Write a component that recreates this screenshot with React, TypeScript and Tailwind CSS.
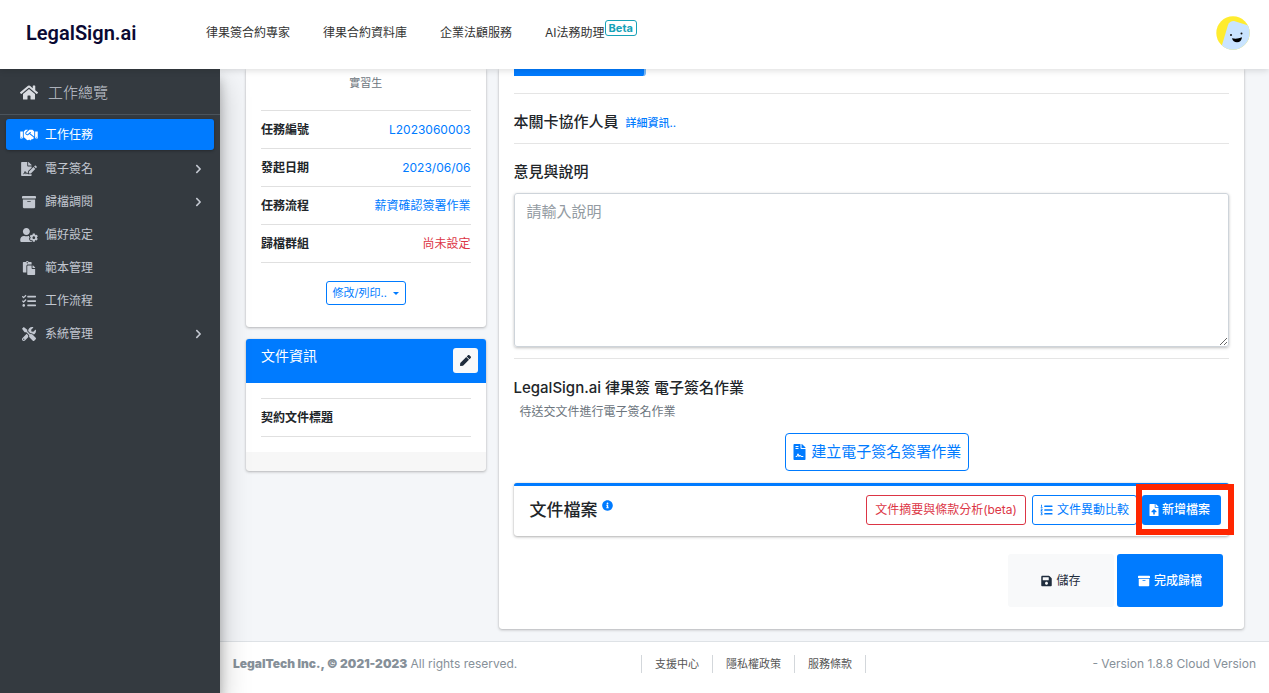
import type { ReactNode } from "react";
import type { IconType } from "react-icons";
import {
  FaArchive,
  FaChevronRight,
  FaFileContract,
  FaFileSignature,
  FaFileUpload,
  FaHandshake,
  FaHome,
  FaInfoCircle,
  FaListOl,
  FaPaste,
  FaPen,
  FaSave,
  FaTasks,
  FaTools,
  FaUserCog,
} from "react-icons/fa";

type MenuItem = { label: string; icon: IconType; active?: boolean; nested?: boolean };

const menu: MenuItem[] = [
  { label: "工作任務", icon: FaHandshake, active: true },
  { label: "電子簽名", icon: FaFileSignature, nested: true },
  { label: "歸檔調閱", icon: FaArchive, nested: true },
  { label: "偏好設定", icon: FaUserCog },
  { label: "範本管理", icon: FaPaste },
  { label: "工作流程", icon: FaTasks },
  { label: "系統管理", icon: FaTools, nested: true },
];

const taskRows = [
  { label: "任務編號", value: "L2023060003", tone: "text-[#007bff]" },
  { label: "發起日期", value: "2023/06/06", tone: "text-[#007bff]" },
  { label: "任務流程", value: "薪資確認簽署作業", tone: "text-[#007bff]" },
  { label: "歸檔群組", value: "尚未設定", tone: "text-[#dc3545]" },
];

function Avatar() {
  return (
    <svg viewBox="0 0 34 34" className="h-[34px] w-[34px]" role="img" aria-label="使用者">
      <defs>
        <clipPath id="avatar-clip">
          <circle cx="17" cy="17" r="16.7" />
        </clipPath>
      </defs>
      <g clipPath="url(#avatar-clip)">
        <rect width="34" height="34" fill="#ffec2e" />
        <path d="M6 29 L12 9 Q13.500 5 18 5 L34 10 V34 H6 Z" fill="#c9e4ff" />
        <circle cx="15" cy="19" r="1" fill="#111" />
        <circle cx="25.500" cy="17.500" r="1" fill="#111" />
        <path d="M16 22.300 Q21 23.500 26 21.300 Q25.500 26.300 21 26.300 Q17 26.300 16 22.300 Z" fill="#000" />
      </g>
    </svg>
  );
}

function Header() {
  return (
    <header className="relative z-20 flex h-[69px] shrink-0 items-center bg-white pr-[19px] pb-1 pl-[26px] shadow-[0_2px_6px_rgba(0,0,0,0.12)]">
      <a href="#" className="w-[180px] font-['Roboto'] text-[20px] leading-6 font-semibold text-[#0b0933]">
        LegalSign.ai
      </a>
      <nav className="flex items-center gap-[33px] text-[#333]">
        <a href="#">律果簽合約專家</a>
        <a href="#">律果合約資料庫</a>
        <a href="#">企業法顧服務</a>
        <a href="#" className="flex items-start">
          AI法務助理
          <span className="-mt-1 rounded-[3px] border border-[#17a2b8] px-[3px] text-[11px] leading-[14px] font-bold text-[#17a2b8]">
            Beta
          </span>
        </a>
      </nav>
      <button type="button" aria-label="帳號" className="ml-auto">
        <Avatar />
      </button>
    </header>
  );
}

function Sidebar() {
  return (
    <aside className="relative z-10 w-[220px] shrink-0 bg-[#343a40] text-[#c2c7d0] shadow-[0_14px_28px_rgba(0,0,0,0.25),0_10px_10px_rgba(0,0,0,0.22)]">
      <a href="#" className="flex h-[46px] items-center gap-[10px] border-b border-[#4b545c] pt-[2px] pl-5 text-[15px] font-light">
        <FaHome className="h-[17px] w-[18px] text-[#d8dbe0]" />
        工作總覽
      </a>
      <ul className="flex flex-col gap-[2px] px-[6px] pt-1">
        {menu.map(({ label, icon: Icon, active, nested }) => (
          <li key={label} className={active ? "mb-px" : ""}>
            <a
              href="#"
              className={
                active
                  ? "flex h-[31px] items-center rounded-[3px] bg-[#007bff] pr-3 pl-[14px] text-white shadow-[0_1px_3px_rgba(0,0,0,0.3)]"
                  : "flex h-[31px] items-center rounded-[3px] pr-3 pl-[14px]"
              }
            >
              <Icon className="mr-[7px] h-[14px] w-[18px]" />
              {label}
              {nested && <FaChevronRight className="ml-auto h-[10px] w-[7px]" />}
            </a>
          </li>
        ))}
      </ul>
    </aside>
  );
}

function Card({ className = "", children }: { className?: string; children: ReactNode }) {
  return (
    <section className={`overflow-hidden bg-white shadow-[0_0_1px_rgba(0,0,0,0.2),0_1px_3px_rgba(0,0,0,0.25)] ${className}`}>
      {children}
    </section>
  );
}

function TaskCard() {
  return (
    <Card className="rounded-b-[3px] px-[15px] pt-[6px] pb-[22px]">
      <p className="mb-[19px] text-center text-[11px] leading-4 text-[#6c757d]">實習生</p>
      <dl className="border-t border-black/12">
        {taskRows.map((row) => (
          <div key={row.label} className="flex h-[38px] items-center justify-between border-b border-black/12">
            <dt className="font-bold">{row.label}</dt>
            <dd className={row.tone}>{row.value}</dd>
          </div>
        ))}
      </dl>
      <div className="mt-[18px] flex justify-center">
        <button
          type="button"
          className="flex h-6 items-center gap-[6px] rounded-[3px] border border-[#007bff] px-[6px] text-[11px] text-[#007bff]"
        >
          修改/列印..
          <span className="border-x-[3px] border-t-[3px] border-x-transparent border-t-[#007bff]" />
        </button>
      </div>
    </Card>
  );
}

function DocumentCard() {
  return (
    <Card className="rounded-[3px]">
      <div className="flex h-11 items-start justify-between bg-[#007bff] pt-[9px] pr-2 pl-[15px] text-white">
        <h2 className="text-[14px] leading-4">文件資訊</h2>
        <button
          type="button"
          aria-label="編輯文件資訊"
          className="flex h-[25px] w-[25px] items-center justify-center rounded-[3px] bg-[#f8f9fa] text-[#1f2d3d]"
        >
          <FaPen className="h-[11px] w-[11px]" />
        </button>
      </div>
      <div className="px-[15px] py-[15px]">
        <p className="flex h-[39px] items-center border-y border-black/12 font-bold">契約文件標題</p>
      </div>
      <div className="h-[19px] bg-black/3" />
    </Card>
  );
}

function FilesPanel() {
  return (
    <div className="mt-3 flex h-[53px] items-center rounded-[3px] border-t-[3px] border-[#007bff] bg-white pr-2 pb-[2px] pl-4 shadow-[0_0_1px_rgba(0,0,0,0.2),0_1px_3px_rgba(0,0,0,0.3)]">
      <h2 className="text-[17px] font-medium">文件檔案</h2>
      <FaInfoCircle className="mb-[10px] ml-1 h-[11px] w-[11px] text-[#007bff]" />
      <div className="ml-auto flex items-center">
        <button type="button" className="h-[30px] rounded-[3px] border border-[#dc3545] px-2 text-[#dc3545]">
          文件摘要與條款分析(beta)
        </button>
        <button
          type="button"
          className="ml-[6px] flex h-[30px] items-center gap-1 rounded-[3px] border border-[#007bff] px-[7px] text-[#007bff]"
        >
          <FaListOl className="h-3 w-[13px]" />
          文件異動比較
        </button>
        <div className="relative ml-[5px]">
          <button
            type="button"
            className="flex h-[30px] items-center gap-[3px] rounded-[3px] bg-[#007bff] pr-[11px] pl-[7px] font-medium text-white"
          >
            <FaFileUpload className="h-3 w-[10px]" />
            新增檔案
          </button>
          <div className="pointer-events-none absolute -top-[11px] -right-[13px] -bottom-[10px] -left-[6px] border-[6px] border-[#ff2600]" />
        </div>
      </div>
    </div>
  );
}

function WorkCard() {
  return (
    <Card className="rounded-b-[3px] px-[15px] pb-[22px]">
      <div className="h-[7px] w-[132px] rounded-br-[3px] border-r-2 border-[#7ab8f5] bg-[#007bff]" />
      <div className="mt-[17px] flex h-[51px] items-center gap-[7px] border-y border-black/10 pt-[6px]">
        <h2 className="text-[15px] font-medium">本關卡協作人員</h2>
        <a href="#" className="pt-[3px] text-[11px] font-medium text-[#007bff]">
          詳細資訊..
        </a>
      </div>
      <label htmlFor="comment" className="mt-4 block text-[15px] leading-6 font-medium">
        意見與說明
      </label>
      <textarea
        id="comment"
        placeholder="請輸入說明"
        className="mt-[9px] block h-[154px] w-full rounded-[3px] border border-[#ced4da] px-3 py-[6px] text-[15px] leading-[23px] shadow-[0_1px_3px_rgba(0,0,0,0.25)] placeholder:text-[#939ba2]"
      />
      <div className="mt-[11px] border-t border-black/10 pt-[17px]">
        <h2 className="text-[15px] leading-6 font-medium">LegalSign.ai 律果簽 電子簽名作業</h2>
        <p className="mt-[3px] pl-[6px] leading-[18px] text-[#6c757d]">待送交文件進行電子簽名作業</p>
      </div>
      <div className="mt-3 flex justify-center pl-3">
        <button
          type="button"
          className="flex h-[38px] items-center gap-[5px] rounded-[4px] border border-[#007bff] px-[7px] text-[15px] text-[#007bff]"
        >
          <FaFileContract className="h-4 w-[13px]" />
          建立電子簽名簽署作業
        </button>
      </div>
      <FilesPanel />
      <div className="mt-[18px] flex justify-end gap-[3px] pr-[6px]">
        <button
          type="button"
          className="flex h-[53px] w-[106px] items-center justify-center gap-1 rounded-[3px] bg-[#f8f9fa] text-[#1f2d3d]"
        >
          <FaSave className="h-3 w-[11px]" />
          儲存
        </button>
        <button
          type="button"
          className="flex h-[53px] w-[106px] items-center justify-center gap-1 rounded-[3px] bg-[#007bff] font-medium text-white"
        >
          <FaArchive className="h-3 w-3" />
          完成歸檔
        </button>
      </div>
    </Card>
  );
}

function Footer() {
  return (
    <footer className="mt-auto grid grid-cols-[1fr_auto_1fr] items-center border-t border-[#dee2e6] bg-white px-[13px] pt-[13px] pb-5 text-[#869099]">
      <p>
        <strong className="font-black">LegalTech Inc., © 2021-2023</strong> All rights reserved.
      </p>
      <nav className="ml-[18px] flex h-[18px] items-center divide-x divide-[#d3d7db] border-x border-[#d3d7db] text-[11px] leading-[18px] text-[#555]">
        <a href="#" className="px-[13px]">支援中心</a>
        <a href="#" className="px-[13px]">隱私權政策</a>
        <a href="#" className="px-[13px]">服務條款</a>
      </nav>
      <p className="text-right">- Version 1.8.8 Cloud Version</p>
    </footer>
  );
}

export default function App() {
  return (
    <div className="flex min-h-screen flex-col bg-[#f4f6f9] font-['Inter','Noto_Sans_CJK_TC',sans-serif] text-[12px] leading-[18px] text-[#212529]">
      <Header />
      <div className="flex flex-1">
        <Sidebar />
        <div className="flex min-w-0 flex-1 flex-col">
          <main className="flex items-start pr-[19px] pb-3 pl-5">
            <div className="flex w-1/4 flex-col gap-3 pr-[7px] pl-[6px]">
              <TaskCard />
              <DocumentCard />
            </div>
            <div className="w-3/4 px-[6px]">
              <WorkCard />
            </div>
          </main>
          <Footer />
        </div>
      </div>
    </div>
  );
}
